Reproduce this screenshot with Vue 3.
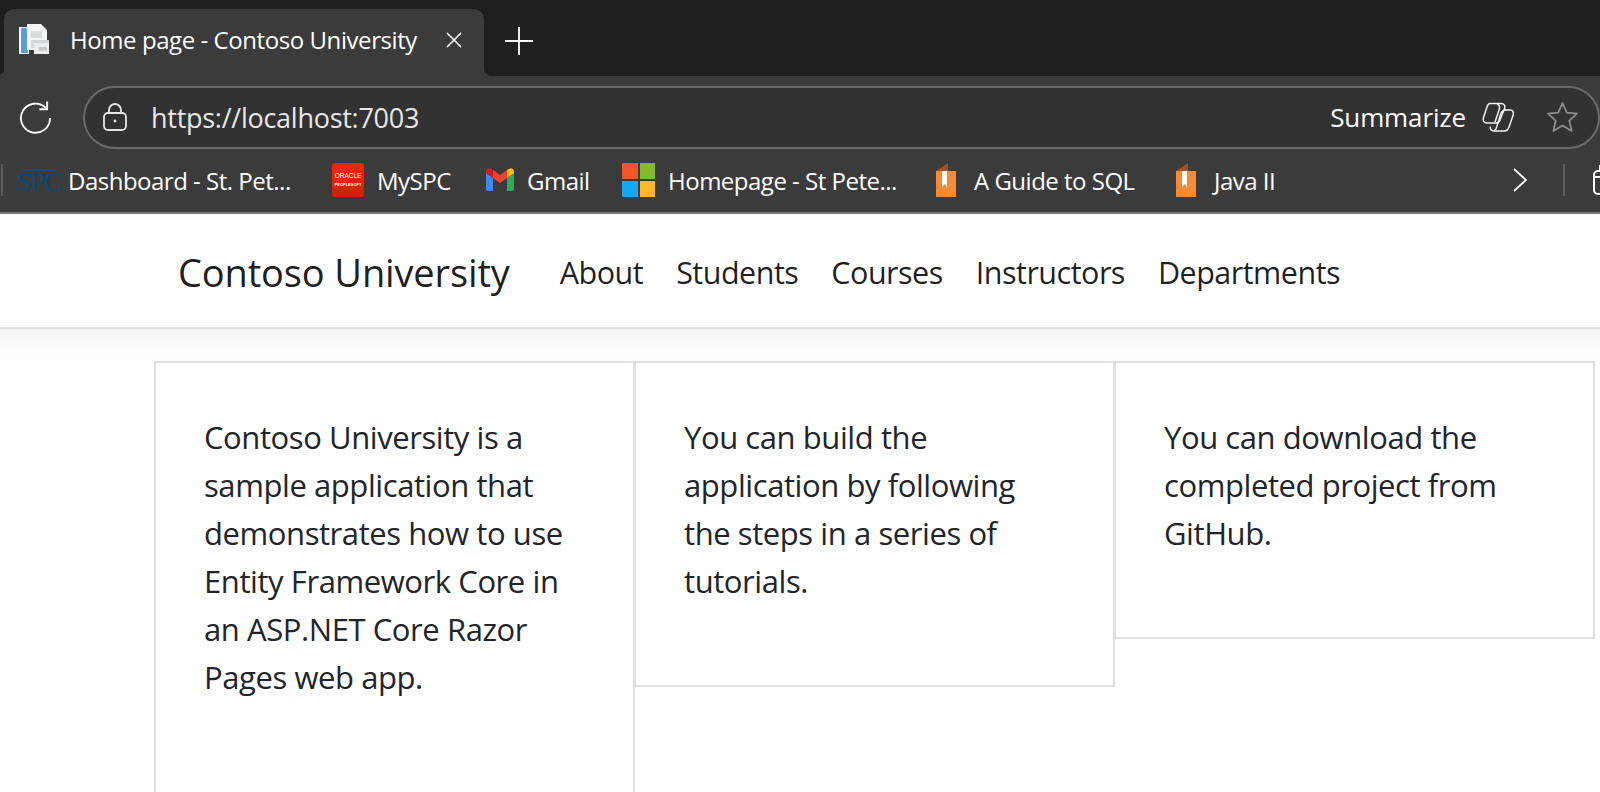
<template>
  <div class="page">
    <div class="tabstrip">
      <div class="tab">
        <svg class="tab-icon" width="32" height="34" viewBox="0 0 32 34">
          <path d="M1 4h10v27H1z" fill="#f2f4f6" />
          <path d="M3 5h7v25H3z" fill="#5a9fd4" />
          <path d="M9 1h14l6 6v20H9z" fill="#f4f5f6" />
          <path d="M13 8h11v7H13zM13 17h6v8h-6z" fill="#d9dcdf" />
          <path d="M16 17h15v14H16z" fill="#d2d4d6" />
          <path d="M16 20h15v11H16z" fill="#eceded" />
          <path d="M21 24h8v4h-8z" fill="#c8cacc" />
        </svg>
        <span class="tab-title">Home page - Contoso University</span>
        <svg class="tab-close" width="16" height="16" viewBox="0 0 16 16">
          <path d="M1 1l14 14M15 1L1 15" stroke="#fff" stroke-width="1.7" />
        </svg>
      </div>
      <svg class="new-tab" width="28" height="28" viewBox="0 0 28 28">
        <path d="M14 0v28M0 14h28" stroke="#fff" stroke-width="1.8" />
      </svg>
    </div>

    <div class="toolbar">
      <svg class="reload" width="34" height="34" viewBox="0 0 34 34" fill="none" stroke="#fff" stroke-width="1.9">
        <path d="M27.5 7.5A15 15 0 1 0 32 18" />
        <path d="M29 1v8h-8" />
      </svg>
      <div class="address">
        <svg width="24" height="28" viewBox="0 0 24 28" fill="none" stroke="#e6e6e6" stroke-width="1.8">
          <rect x="1" y="10" width="22" height="17" rx="4" />
          <path d="M6 10V7a6 6 0 0 1 12 0v3" />
          <circle cx="12" cy="18" r="1.4" fill="#e6e6e6" stroke="none" />
        </svg>
        <span class="url">https://localhost:7003</span>
        <span class="summarize">Summarize</span>
        <svg class="copilot" width="32" height="30" viewBox="0 0 32 30" fill="none" stroke="#f0f0f0" stroke-width="1.5">
          <path d="M8 1.500h11c3 0 4.500 2 3.500 5L18 18c-.7 2-2 3-4 3H5c-3 0-4.500-2.500-3.500-5.500L5 5c.7-2.200 1.500-3.500 3-3.500z" />
          <path d="M22.500 8H28c3 0 4 2.500 3 5.500L27 25c-.8 2.500-2.500 4-5 4H12c-3 0-4-2-3.500-4.500" />
          <path d="M15 2c3 1 3 3 2 6l-4 12" />
          <path d="M24 8c-3 0-4.500 1.500-5.500 4.500L15 24c-.7 2.500-1 4-3 5" />
        </svg>
        <svg class="star" width="33" height="32" viewBox="0 0 33 32" fill="none" stroke="#8e8e8e" stroke-width="1.8">
          <path d="M16.500 2l4.300 9.700 10.200 1-7.700 7 2.300 10.300-9.100-5.400-9.100 5.400 2.300-10.300-7.700-7 10.200-1z" stroke-linejoin="round" />
        </svg>
      </div>
    </div>

    <div class="bookmarks">
      <i class="sep-left"></i>
      <div class="bm-list">
        <div class="bm">
          <span class="spc"><i></i><span>SPC</span></span>
          <span>Dashboard - St. Pet...</span>
        </div>
        <div class="bm">
          <span class="oracle"><b>ORACLE</b><small>PEOPLESOFT</small></span>
          <span>MySPC</span>
        </div>
        <div class="bm">
          <svg width="28" height="24" viewBox="0 0 28 24">
            <path d="M2 23h5V10L0 5v16c0 1 1 2 2 2z" fill="#4285f4" />
            <path d="M21 23h5c1 0 2-1 2-2V5l-7 5z" fill="#34a853" />
            <path d="M21 2v8l7-5V3c0-2-3-4-5-2z" fill="#fbbc04" />
            <path d="M7 10V2l7 5 7-5v8l-7 5z" fill="#ea4335" />
            <path d="M0 3v2l7 5V2L5 1C3-1 0 1 0 3z" fill="#c5221f" />
          </svg>
          <span>Gmail</span>
        </div>
        <div class="bm">
          <span class="ms"><i></i><i></i><i></i><i></i></span>
          <span>Homepage - St Pete...</span>
        </div>
        <div class="bm book-gap">
          <svg width="20" height="34" viewBox="0 0 20 34">
            <path d="M0 8l12-8v8z" fill="#a84f22" />
            <path d="M0 8h20v26H0z" fill="#f48c37" />
            <path d="M6 8h5v16l-2.500-3L6 24z" fill="#fff" />
          </svg>
          <span>A Guide to SQL</span>
        </div>
        <div class="bm book-gap">
          <svg width="20" height="34" viewBox="0 0 20 34">
            <path d="M0 8l12-8v8z" fill="#a84f22" />
            <path d="M0 8h20v26H0z" fill="#f48c37" />
            <path d="M6 8h5v16l-2.500-3L6 24z" fill="#fff" />
          </svg>
          <span>Java II</span>
        </div>
      </div>
      <svg class="chevron" width="14" height="24" viewBox="0 0 14 24" fill="none" stroke="#fff" stroke-width="1.8">
        <path d="M1 1l12 11L1 23" />
      </svg>
      <i class="sep-right"></i>
      <svg class="clipped" width="20" height="30" viewBox="0 0 20 30" fill="none" stroke="#fff" stroke-width="2">
        <rect x="1" y="6" width="24" height="23" rx="4" />
        <path d="M1 12h24M7 6V1h14v5" />
      </svg>
    </div>

    <nav class="navbar">
      <span class="brand">Contoso University</span>
      <a v-for="link in links" :key="link" class="nav-link">{{ link }}</a>
    </nav>

    <main class="row">
      <div v-for="(text, i) in cards" :key="i" class="card">
        <p>{{ text }}</p>
      </div>
    </main>
  </div>
</template>

<script setup>
const links = ['About', 'Students', 'Courses', 'Instructors', 'Departments']

const cards = [
  'Contoso University is a sample application that demonstrates how to use Entity Framework Core in an ASP.NET Core Razor Pages web app.',
  'You can build the application by following the steps in a series of tutorials.',
  'You can download the completed project from GitHub.'
]
</script>

<style>
html,
body {
  margin: 0;
  height: 792px;
  overflow: hidden;
  background: #fff;
}
</style>

<style scoped>
.page {
  font-family: "Open Sans", "Noto Sans", sans-serif;
  height: 792px;
  overflow: hidden;
}

.tabstrip {
  height: 76px;
  background: #1f1f1f;
  display: flex;
  align-items: flex-end;
  box-sizing: border-box;
  padding-left: 4px;
}

.tab {
  position: relative;
  width: 480px;
  height: 67px;
  background: #3b3b3b;
  border-radius: 10px 10px 0 0;
  display: flex;
  align-items: center;
  box-sizing: border-box;
  padding: 0 0 6px 14px;
  color: #fff;
}

/* flared bottom corners where the tab meets the toolbar */
.tab::before,
.tab::after {
  content: "";
  position: absolute;
  bottom: 0;
  width: 8px;
  height: 8px;
}

.tab::before {
  right: 100%;
  background: radial-gradient(circle at 0 0, transparent 8px, #3b3b3b 8.500px);
}

.tab::after {
  left: 100%;
  background: radial-gradient(circle at 100% 0, transparent 8px, #3b3b3b 8.500px);
}

.tab-title {
  margin-left: 20px;
  font-size: 24px;
  letter-spacing: -0.43px;
  white-space: nowrap;
}

.tab-close {
  margin-left: 29px;
}

.new-tab {
  margin: 0 0 21px 21px;
}

.toolbar {
  height: 62px;
  padding: 10px 0 4px 19px;
  background: #3b3b3b;
  display: flex;
  align-items: center;
}

.address {
  margin-left: 31px;
  width: 1517px;
  height: 63px;
  box-sizing: border-box;
  border: 2px solid #6a6a6a;
  border-radius: 32px;
  background: #323232;
  display: flex;
  align-items: center;
  padding-left: 18px;
  color: #fff;
  flex-shrink: 0;
}

.url {
  margin-left: 24px;
  font-size: 27px;
  letter-spacing: -0.27px;
  color: #e8e8e8;
}

.summarize {
  margin-left: auto;
  font-size: 26px;
  letter-spacing: -0.1px;
}

.copilot {
  margin-left: 16px;
}

.star {
  margin: 0 19px 0 32px;
}

.bookmarks {
  height: 56px;
  padding-bottom: 4px;
  background: #3b3b3b;
  border-bottom: 2px solid #7a7a7a;
  box-sizing: content-box;
  display: flex;
  align-items: center;
  color: #fff;
  font-size: 24px;
  letter-spacing: -0.5px;
  white-space: nowrap;
  overflow: hidden;
}

.sep-left,
.sep-right {
  width: 2px;
  height: 32px;
  background: #5c5c5c;
  flex-shrink: 0;
}

.sep-left {
  margin-left: 1px;
}

.bm-list {
  margin-left: 19px;
  display: grid;
  grid-template-columns: 310px 154px 136px 314px 240px 240px;
  width: 1491px;
  flex-shrink: 0;
}

.bm {
  display: flex;
  align-items: center;
  gap: 13px;
  height: 34px;
}

.book-gap {
  gap: 18px;
}

.spc {
  width: 33px;
  color: #12466f;
  font-family: "Liberation Serif", serif;
  font-size: 28px;
  line-height: 20px;
  letter-spacing: -1.8px;
  display: flex;
  flex-direction: column;
  align-items: center;
}

.spc i {
  width: 32px;
  height: 2px;
  margin-bottom: 1px;
  background: #1c4a70;
}

.oracle {
  width: 32px;
  height: 34px;
  border-radius: 2px;
  background: linear-gradient(#e92b05, #cf2000);
  color: #fff;
  display: flex;
  flex-direction: column;
  align-items: center;
  justify-content: center;
  letter-spacing: 0;
  font-family: "Liberation Sans", sans-serif;
}

.oracle b {
  font-size: 6.500px;
  font-weight: 400;
  line-height: 10px;
}

.oracle small {
  font-size: 4px;
  font-weight: 700;
  line-height: 8px;
}

.ms {
  width: 33px;
  height: 34px;
  display: grid;
  grid-template-columns: 1fr 1fr;
  grid-template-rows: 1fr 1fr;
  gap: 2px;
}

.ms i:nth-child(1) {
  background: #f25527;
}

.ms i:nth-child(2) {
  background: #83b92d;
}

.ms i:nth-child(3) {
  background: #18a6f0;
}

.ms i:nth-child(4) {
  background: #feb92b;
}

.chevron {
  flex-shrink: 0;
}

.sep-right {
  margin-left: 36px;
}

.clipped {
  margin-left: 28px;
  flex-shrink: 0;
}

.navbar {
  height: 115px;
  padding: 3px 0 0 178px;
  border-bottom: 2px solid #dee2e6;
  box-sizing: border-box;
  display: flex;
  align-items: center;
  background: #fff;
}

.brand {
  font-size: 38px;
  letter-spacing: -0.13px;
  color: rgba(0, 0, 0, 0.9);
  margin-right: 50px;
}

.nav-link {
  font-size: 30.500px;
  letter-spacing: -0.5px;
  color: rgba(0, 0, 0, 0.88);
  margin-right: 33px;
}

.row {
  background: linear-gradient(#f6f6f6, #fff 32px);
  display: grid;
  grid-template-columns: 480px 480px 480px;
  align-items: start;
  padding: 32px 0 0 154px;
}

.card {
  border: 2px solid #dee2e6;
  box-sizing: border-box;
  padding: 50px 48px 48px;
  margin-right: -1px;
  background: #fff;
}

.card:first-child {
  min-height: 480px;
}

.card p {
  margin: 0 0 32px;
  font-size: 31px;
  line-height: 48px;
  letter-spacing: -0.42px;
  color: #212529;
}
</style>
